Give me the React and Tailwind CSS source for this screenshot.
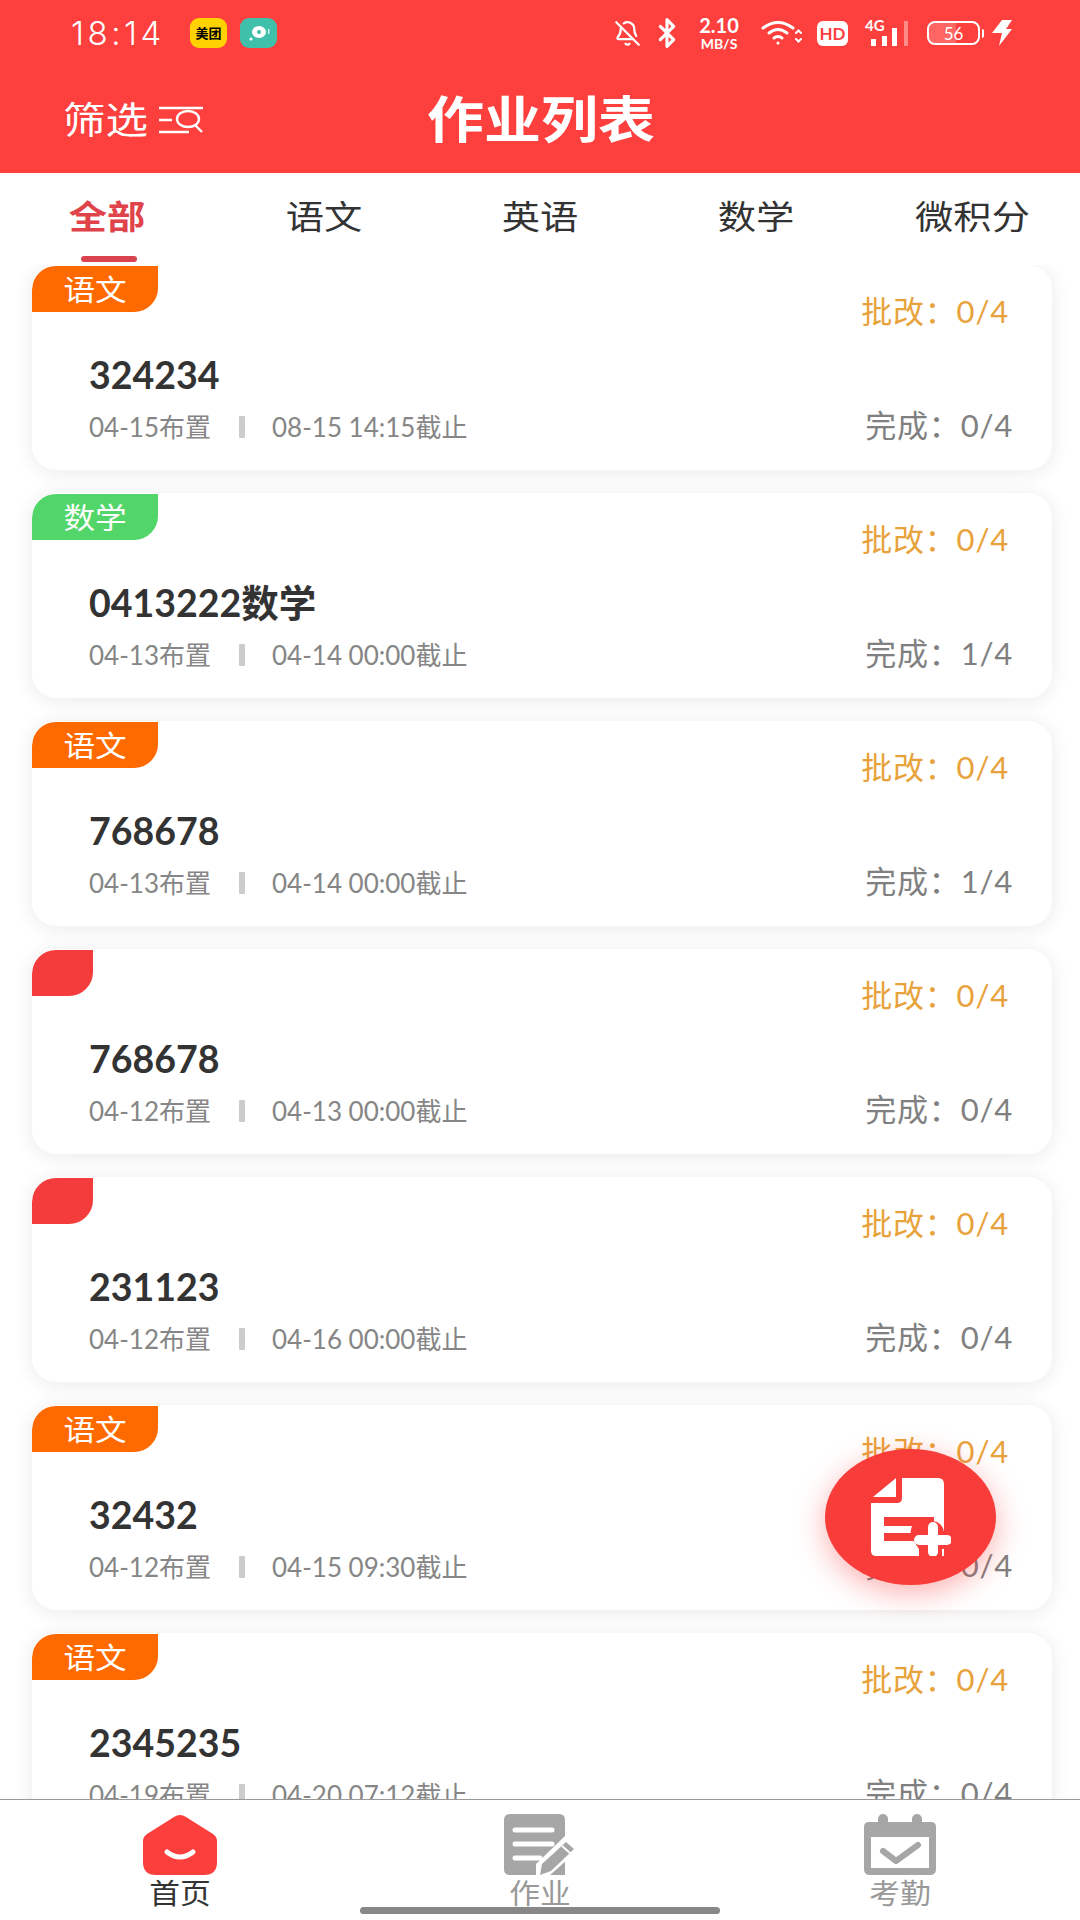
import { BellOff, Bluetooth } from 'lucide-react'

const cards = [
  { tag: '语文', color: 'orange', title: '324234', start: '04-15布置', end: '08-15 14:15截止', done: '0/4' },
  { tag: '数学', color: 'green', title: '0413222数学', start: '04-13布置', end: '04-14 00:00截止', done: '1/4' },
  { tag: '语文', color: 'orange', title: '768678', start: '04-13布置', end: '04-14 00:00截止', done: '1/4' },
  { tag: '', color: 'red', title: '768678', start: '04-12布置', end: '04-13 00:00截止', done: '0/4' },
  { tag: '', color: 'red', title: '231123', start: '04-12布置', end: '04-16 00:00截止', done: '0/4' },
  { tag: '语文', color: 'orange', title: '32432', start: '04-12布置', end: '04-15 09:30截止', done: '0/4' },
  { tag: '语文', color: 'orange', title: '2345235', start: '04-19布置', end: '04-20 07:12截止', done: '0/4' },
]

const tagColors = {
  orange: 'bg-[#ff6a00] w-[126px]',
  green: 'bg-[#52d66a] w-[126px]',
  red: 'bg-[#f53c3c] w-[61px]',
}

function StatusBar() {
  return (
    <div className="flex h-[66px] items-center pl-[71px] pr-[68px] text-white">
      <span className="w-[91px] whitespace-nowrap text-[33px] leading-none tracking-[3.5px] font-['Inter',sans-serif] font-light">18:14</span>
      <div className="ml-[28px] flex h-[30px] w-[37px] items-center justify-center rounded-[9px] bg-[#ffd200] text-[13px] font-bold leading-none text-black">美团</div>
      <div className="ml-[13px] flex h-[30px] w-[37px] items-center justify-center rounded-[9px] bg-[#3fc0ab]">
        <svg width="24" height="18" viewBox="0 0 24 18">
          <ellipse cx="12" cy="8" rx="7" ry="6" fill="#fff" />
          <circle cx="12" cy="8" r="2" fill="#3fc0ab" />
          <circle cx="4" cy="15" r="1.6" fill="#fff" />
          <rect x="21" y="5" width="1.4" height="5" fill="#d5f3ee" />
        </svg>
      </div>
      <div className="ml-auto flex items-center">
        <BellOff size={27} strokeWidth={2} />
        <Bluetooth size={32} strokeWidth={2.4} className="ml-[10px]" />
        <div className="ml-[12px] flex w-[48px] flex-col items-center font-bold leading-none">
          <span className="text-[20px] leading-[21px]">2.10</span>
          <span className="text-[14px] leading-[15px]">MB/S</span>
        </div>
        <svg className="ml-[18px]" width="42" height="26" viewBox="0 0 42 26" fill="none" stroke="#fff" strokeWidth="3" strokeLinecap="round">
          <path d="M2 8 Q17 -3 32 8" />
          <path d="M8 13 Q17 6 26 13" />
          <path d="M13 18 Q17 15 21 18" />
          <circle cx="17" cy="23" r="1.6" fill="#fff" stroke="none" />
          <path d="M35 13 l2.5 -2.5 l2.5 2.5 M35 19 l2.5 2.5 l2.5 -2.5" strokeWidth="2" />
        </svg>
        <div className="ml-[14px] flex h-[25px] w-[31px] items-center justify-center rounded-[6px] bg-white text-[17px] font-bold leading-none text-[#fd403d]">HD</div>
        <div className="relative ml-[17px] h-[28px] w-[44px]">
          <span className="absolute left-0 top-[-1px] text-[15px] font-bold leading-none">4G</span>
          <svg className="absolute left-0 top-0" width="44" height="28" viewBox="0 0 44 28" fill="#fff">
            <rect x="6" y="20" width="5" height="7" />
            <rect x="17" y="17" width="5" height="10" />
            <rect x="27" y="9" width="5" height="18" />
            <rect x="39" y="2" width="4" height="25" fill="#ff8a88" />
          </svg>
        </div>
        <div className="ml-[18px] flex items-center">
          <div className="relative flex h-[24px] w-[53px] items-center justify-center overflow-hidden rounded-[8px] border-2 border-white text-[17px] leading-none">
            <div className="absolute inset-y-0 left-0 w-[56%] bg-white/20" />
            <span className="relative">56</span>
          </div>
          <div className="ml-[2px] h-[9px] w-[2px] rounded-r bg-white" />
        </div>
        <svg className="ml-[8px]" width="20" height="26" viewBox="0 0 20 26" fill="#fff">
          <path d="M10 0 H20 L14 9 H20 L7 26 L10 13 H0 Z" />
        </svg>
      </div>
    </div>
  )
}

function Header() {
  return (
    <div className="h-[173px] shrink-0 bg-[#fd403d]">
      <StatusBar />
      <div className="relative flex h-[107px] items-center justify-center pb-px text-white">
        <div className="absolute left-[63px] top-[35px] flex items-center">
          <span className="inline-block origin-left scale-x-[1.15] whitespace-nowrap text-[37px] leading-none">筛选</span>
          <svg className="ml-[21px]" width="46" height="30" viewBox="0 0 46 30" fill="none" stroke="#fff" strokeWidth="2.4">
            <path d="M1 3 H45 M1 15 H14 M1 27 H31" />
            <ellipse cx="30" cy="14" rx="11" ry="8" />
            <path d="M37 20 L44 27" />
          </svg>
        </div>
        <span className="inline-block scale-x-[1.14] pl-px text-[50px] font-bold leading-none">作业列表</span>
      </div>
    </div>
  )
}

function Tabs() {
  const tabs = ['全部', '语文', '英语', '数学', '微积分']
  return (
    <div className="flex h-[92px] shrink-0 bg-white">
      {tabs.map((t, i) => (
        <div key={t} className={`relative flex flex-1 justify-center pt-[27px] ${i === 0 ? '' : 'pl-[2px]'}`}>
          <span className={`inline-block scale-x-[1.16] whitespace-nowrap text-[33px] leading-none ${i === 0 ? 'font-bold text-[#e04349]' : 'text-[#333]'}`}>{t}</span>
          {i === 0 && <div className="absolute bottom-[3px] left-[81px] h-[6px] w-[56px] rounded-full bg-[#d9434f]" />}
        </div>
      ))}
    </div>
  )
}

function Card({ c }) {
  return (
    <div className="flex h-[205px] shrink-0 justify-between overflow-hidden rounded-[24px] bg-white shadow-[0_2px_20px_rgba(0,0,0,0.09)]">
      <div className="flex flex-col">
        <div className={`mt-[1px] flex h-[46px] items-center justify-center rounded-tl-[24px] rounded-br-[24px] ${tagColors[c.color]}`}>
          <span className="inline-block scale-x-[1.09] text-[29px] leading-none text-white">{c.tag}</span>
        </div>
        <div className="ml-[57px] mt-[43px] text-[37.5px] font-bold leading-[40px] text-[#333]">{c.title}</div>
        <div className="ml-[57px] mt-[17px] flex items-center text-[26px] leading-[30px] text-[#868686]">
          <span>{c.start}</span>
          <div className="ml-[28px] h-[22px] w-[6px] rounded-[1px] bg-[#ccc]" />
          <span className="ml-[27px]">{c.end}</span>
        </div>
      </div>
      <div className="flex flex-col items-end pr-[39px] pt-[29px] text-[31px] leading-[34px] tracking-[0.8px]">
        <span className="mr-[4px] text-[#e8a23c]">批改：0/4</span>
        <span className="mt-[80px] text-[#808080]">完成：{c.done}</span>
      </div>
    </div>
  )
}

function BottomNav() {
  return (
    <div className="flex h-[121px] shrink-0 border-t border-[#999] bg-white">
      <div className="flex flex-1 flex-col items-center pt-[15px]">
        <svg width="74" height="60" viewBox="0 0 74 60">
          <path d="M37 0 Q40 0 43 2 L70 19 Q74 22 74 26 V47 Q74 60 61 60 H13 Q0 60 0 47 V26 Q0 22 4 19 L31 2 Q34 0 37 0 Z" fill="#fa3f3c" />
          <path d="M24 37 Q37 47 50 37" fill="none" stroke="#fff" strokeWidth="5" strokeLinecap="round" />
        </svg>
        <span className="mt-[3px] inline-block scale-x-[1.1] text-[28px] leading-[30px] text-[#333]">首页</span>
      </div>
      <div className="flex flex-1 flex-col items-center pt-[14px]">
        <svg width="72" height="61" viewBox="0 0 72 61">
          <path d="M6 0 H55 Q61 0 61 6 V61 H6 Q0 61 0 55 V6 Q0 0 6 0 Z" fill="#a6a6a6" />
          <path d="M11 16 H48 M11 30 H48 M11 44 H36" stroke="#fff" strokeWidth="5" strokeLinecap="round" />
          <path d="M61 22 L72 32 V38 L46 61 H32 L32 50 Z" fill="#fff" />
          <path d="M62 28 L70 35 L47 57 L36 61 L38 50 Z" fill="#a6a6a6" />
          <path d="M58 32 L66 39" stroke="#fff" strokeWidth="2" />
        </svg>
        <span className="mt-[3px] inline-block scale-x-[1.1] text-[28px] leading-[30px] text-[#999]">作业</span>
      </div>
      <div className="flex flex-1 flex-col items-center pt-[14px]">
        <svg width="72" height="61" viewBox="0 0 72 61">
          <path d="M5 8 H14 V5 a5 5 0 0 1 10 0 V8 H48 V5 a5 5 0 0 1 10 0 V8 H67 Q72 8 72 13 V55 Q72 61 66 61 H6 Q0 61 0 55 V13 Q0 8 5 8 Z" fill="#a6a6a6" />
          <rect x="7" y="23" width="58" height="31" fill="#fff" />
          <path d="M19 37 L32 47 L54 31" fill="none" stroke="#a6a6a6" strokeWidth="6" strokeLinecap="round" strokeLinejoin="round" />
        </svg>
        <span className="mt-[3px] inline-block scale-x-[1.1] text-[28px] leading-[30px] text-[#999]">考勤</span>
      </div>
    </div>
  )
}

export default function App() {
  return (
    <div className="relative flex h-[1920px] w-[1080px] flex-col overflow-hidden bg-white font-['Lato','Noto_Sans_CJK_SC',sans-serif]">
      <Header />
      <Tabs />
      <div className="flex min-h-0 flex-1 flex-col gap-[23px] overflow-hidden pl-[32px] pr-[28px]">
        {cards.map((c, i) => <Card key={i} c={c} />)}
      </div>
      <BottomNav />

      <div className="absolute left-[825px] top-[1449px] flex h-[136px] w-[171px] items-center justify-center rounded-[50%] bg-[#f73c39] shadow-[0_8px_30px_rgba(247,60,57,0.4)]">
        <svg width="80" height="78" viewBox="0 0 80 78">
          <path d="M2 19 L25 0 V19 Z" fill="#fff" />
          <path d="M31 0 H67 Q73 0 73 6 V78 H5 Q0 78 0 73 V25 H26 Q31 25 31 20 Z" fill="#fff" />
          <rect x="13" y="39" width="50" height="9" fill="#f73c39" />
          <rect x="13" y="55" width="34" height="8" fill="#f73c39" />
          <path d="M42 62 a14 14 0 0 1 20 -19 a12 12 0 0 1 11 11 H80 V71 H71 V78 H48 V71 Z" fill="#f73c39" />
          <path d="M48 62 H76 M62 49 V74" stroke="#fff" strokeWidth="10" strokeLinecap="round" />
        </svg>
      </div>
      <div className="absolute left-[360px] top-[1907px] h-[7px] w-[360px] rounded-full bg-[#888]" />
    </div>
  )
}
